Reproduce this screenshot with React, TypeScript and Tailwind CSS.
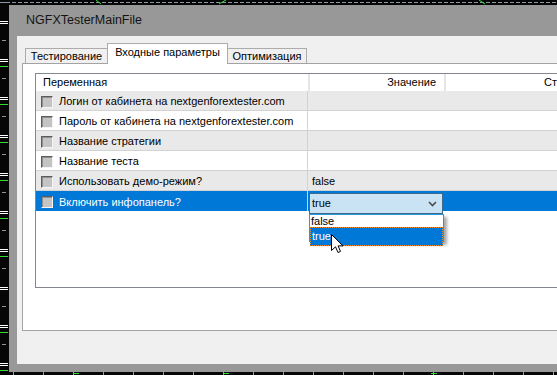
import React from "react";

type Param = { name: string; value: string; selected?: boolean };

const params: Param[] = [
  { name: "Логин от кабинета на nextgenforextester.com", value: "" },
  { name: "Пароль от кабинета на nextgenforextester.com", value: "" },
  { name: "Название стратегии", value: "" },
  { name: "Название теста", value: "" },
  { name: "Использовать демо-режим?", value: "false" },
  { name: "Включить инфопанель?", value: "true", selected: true },
];

// chart leftovers peeking around the dialog
function ChartBackdrop() {
  const left = Array.from({ length: 10 }, (_, k) => 2 + k * 38);
  const ticks = Array.from({ length: 19 }, (_, k) => 13 + k * 30);
  return (
    <svg className="absolute inset-0" width={557} height={375}>
      <line x1={0} y1={2.5} x2={557} y2={2.5} stroke="#8a96a3" strokeDasharray="4 2" />
      <line x1={96} y1={0} x2={101} y2={4} stroke="#2fe02f" />
      <line x1={219} y1={4} x2={226} y2={0} stroke="#2fe02f" />
      <line x1={479} y1={0} x2={485} y2={4} stroke="#2fe02f" />
      {left.map((y) => (
        <g key={y}>
          <line x1={2} y1={y + 0.5} x2={6} y2={y + 0.5} stroke="#8a96a3" />
          <line x1={0} y1={y + 19.5} x2={8} y2={y + 19.5} stroke="#ffffff" />
          <line x1={0} y1={y + 21.5} x2={8} y2={y + 21.5} stroke="#ffffff" />
          {y !== 2 && y !== 268 && (
            <line x1={0} y1={y + 26.5} x2={8} y2={y + 26.5} stroke="#2fe02f" />
          )}
        </g>
      ))}
      {ticks.map((x) => (
        <line key={x} x1={x + 0.5} y1={372} x2={x + 0.5} y2={375} stroke="#9aa3ad" />
      ))}
      <line x1={73} y1={373.5} x2={79} y2={373.5} stroke="#2fe02f" />
      <line x1={224} y1={373.5} x2={229} y2={373.5} stroke="#2fe02f" />
      <line x1={431} y1={373.5} x2={437} y2={373.5} stroke="#2fe02f" />
    </svg>
  );
}

function CheckBox() {
  return (
    <span className="w-[12px] h-[12px] shrink-0 border-t border-l border-[#5c5c5c] border-b border-r border-b-[#f4f4f4] border-r-[#f4f4f4] bg-[#c4c4c4] shadow-[inset_1px_1px_0_#8f8f8f]" />
  );
}

function TabStrip() {
  return (
    <div className="relative z-10 h-[20px] flex items-end pl-[3px]">
      <div className="w-[82px] h-[15px] border-l border-t border-[#acacac] bg-[#f0f0f0] flex items-center justify-center">
        Тестирование
      </div>
      <div className="w-[121px] h-[21px] -mb-px border-l border-t border-r border-[#acacac] bg-white flex items-center justify-center pb-[3px]">
        Входные параметры
      </div>
      <div className="w-[79px] h-[15px] border-t border-r border-[#acacac] bg-[#f0f0f0] flex items-center justify-center">
        Оптимизация
      </div>
    </div>
  );
}

function ValueEditor() {
  return (
    <>
      <div className="absolute left-px top-[2px] w-[134px] h-[21px] border border-[#3f6b91] bg-[#c9e3f5] text-black flex items-center justify-between pl-[2px] pr-[5px]">
        <span>true</span>
        <svg width={9} height={6}>
          <polyline points="1,1 4.5,4.5 8,1" fill="none" stroke="#4b4b4b" strokeWidth={1.6} />
        </svg>
      </div>
      <div className="absolute left-px top-[23px] w-[135px] h-[28px] border border-[#2c98dc] bg-white text-black shadow-[3px_3px_3px_rgba(0,0,0,0.35)] flex flex-col">
        <div className="h-[12px] flex items-center pl-px">false</div>
        <div className="flex-1 flex items-center pl-px bg-[#0078d7] text-white border border-dotted border-[#f08a24]">
          true
        </div>
      </div>
    </>
  );
}

function ParamList() {
  return (
    <div className="h-[215px] border-l border-t border-b border-[#828790] bg-white flex flex-col">
      <div className="h-[17px] flex shrink-0">
        <div className="w-[274px] shrink-0 border-r-2 border-[#e5e5e5] pl-[7px] flex items-center">Переменная</div>
        <div className="w-[136px] shrink-0 border-r-2 border-[#e5e5e5] pr-[8px] flex items-center justify-end">Значение</div>
        <div className="flex-1 pl-[98px] flex items-center whitespace-nowrap overflow-hidden">Ст</div>
      </div>
      {params.map((p, i) => (
        <div
          key={p.name}
          className={
            p.selected
              ? "h-[20px] flex bg-[#0078d7] text-white"
              : i % 2 === 0
              ? "h-[20px] flex border-b border-[#d2d2d2] bg-[#e9e9e9]"
              : "h-[20px] flex border-b border-[#d2d2d2] bg-white"
          }
        >
          <div className="w-[272px] shrink-0 border-r border-[#d2d2d2] pl-[5px] pt-[2px] flex items-center gap-[6px] whitespace-nowrap overflow-hidden">
            <CheckBox />
            <span>{p.name}</span>
          </div>
          <div className="relative flex-1 pl-[4px] pt-[2px] flex items-center">
            {p.selected ? <ValueEditor /> : p.value}
          </div>
        </div>
      ))}
    </div>
  );
}

export default function App() {
  return (
    <div className="relative w-[557px] h-[375px] overflow-hidden bg-[#060606] font-['Liberation_Sans',Arial,sans-serif] text-[11px] text-black">
      <ChartBackdrop />
      <div className="relative ml-[9px] mt-[5px] w-[560px] h-[367px] bg-[#989898] flex flex-col pl-[8px] pb-[8px]">
        <div className="h-[31px] shrink-0 flex items-center pl-[9px] text-[12.5px] text-[#141414]">
          NGFXTesterMainFile
        </div>
        <div className="flex-1 bg-[#f0f0f0] pl-[5px] pt-[7px]">
          <TabStrip />
          <div className="h-[268px] bg-white border-l border-t border-b border-[#a3a3a3] pl-[12px] pt-[9px]">
            <ParamList />
          </div>
        </div>
      </div>
      <svg className="absolute left-[331px] top-[234px]" width={13} height={20}>
        <path
          d="M0.5 0.5 V16.5 L4.5 12.8 L7 18.5 L9.5 17.4 L7.1 11.9 H12 Z"
          fill="#ffffff"
          stroke="#000000"
          strokeLinejoin="round"
        />
      </svg>
    </div>
  );
}
